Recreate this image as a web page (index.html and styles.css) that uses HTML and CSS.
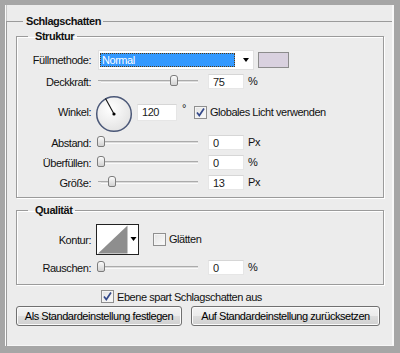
FILE: index.html
```html
<!DOCTYPE html>
<html lang="de">
<head>
    <meta charset="UTF-8">
    <meta name="viewport" content="width=device-width, initial-scale=1.0">
    <title>Ebenenstil - Schlagschatten</title>
    <link rel="stylesheet" href="styles.css">
</head>
<body>

<div class="window">
    <fieldset class="group main-group">
        <legend>Schlagschatten</legend>

        <fieldset class="group box structure">
            <legend>Struktur</legend>

            <div class="row row-blend">
                <span class="label">Füllmethode:</span>
                <div class="select">
                    <span class="select-value">Normal</span>
                    <span class="select-arrow"></span>
                </div>
                <span class="swatch"></span>
            </div>

            <div class="row">
                <span class="label">Deckkraft:</span>
                <div class="slider"><span class="thumb" style="left: 75%"></span></div>
                <input class="field" type="text" value="75" readonly>
                <span class="unit">%</span>
            </div>

            <div class="row row-angle">
                <span class="label">Winkel:</span>
                <svg class="dial" width="38" height="38" viewBox="0 0 38 38">
                    <defs>
                        <radialGradient id="dialFill" cx="40%" cy="35%" r="70%">
                            <stop offset="0" stop-color="#ffffff"/>
                            <stop offset="1" stop-color="#e2e2e2"/>
                        </radialGradient>
                    </defs>
                    <circle cx="19" cy="19" r="17.3" fill="url(#dialFill)" stroke="#4b5878" stroke-width="1.5"/>
                    <line x1="19" y1="19" x2="10.5" y2="3.5" stroke="#111" stroke-width="1.1"/>
                    <circle cx="19" cy="19" r="1.6" fill="#000"/>
                </svg>
                <input class="field field-angle" type="text" value="120" readonly>
                <span class="degree">°</span>
                <label class="check">
                    <span class="check-box">
                        <svg width="11" height="11" viewBox="0 0 11 11"><path d="M2 5.5 L4.3 8.5 L9 1.5" fill="none" stroke="#34498a" stroke-width="1.7"/></svg>
                    </span>
                    Globales Licht verwenden
                </label>
            </div>

            <div class="row">
                <span class="label">Abstand:</span>
                <div class="slider"><span class="thumb" style="left: 0%"></span></div>
                <input class="field" type="text" value="0" readonly>
                <span class="unit">Px</span>
            </div>

            <div class="row">
                <span class="label">Überfüllen:</span>
                <div class="slider"><span class="thumb" style="left: 0%"></span></div>
                <input class="field" type="text" value="0" readonly>
                <span class="unit">%</span>
            </div>

            <div class="row">
                <span class="label">Größe:</span>
                <div class="slider"><span class="thumb" style="left: 11%"></span></div>
                <input class="field" type="text" value="13" readonly>
                <span class="unit">Px</span>
            </div>
        </fieldset>

        <fieldset class="group box quality">
            <legend>Qualität</legend>

            <div class="row row-contour">
                <span class="label">Kontur:</span>
                <svg class="contour" width="43" height="31" viewBox="0 0 43 31">
                    <rect x="0.5" y="0.5" width="42" height="30" fill="#fff" stroke="#222"/>
                    <polygon points="2,29.5 31.5,1.5 31.5,29.5" fill="#8e8e8e"/>
                    <polygon points="34.5,13 40.5,13 37.5,17" fill="#000"/>
                </svg>
                <label class="check check-smooth">
                    <span class="check-box"></span>
                    Glätten
                </label>
            </div>

            <div class="row">
                <span class="label">Rauschen:</span>
                <div class="slider"><span class="thumb" style="left: 0%"></span></div>
                <input class="field" type="text" value="0" readonly>
                <span class="unit">%</span>
            </div>
        </fieldset>

        <label class="check check-layer">
            <span class="check-box">
                <svg width="11" height="11" viewBox="0 0 11 11"><path d="M2 5.5 L4.3 8.5 L9 1.5" fill="none" stroke="#34498a" stroke-width="1.7"/></svg>
            </span>
            Ebene spart Schlagschatten aus
        </label>

        <div class="buttons">
            <button class="btn btn-save">Als Standardeinstellung festlegen</button>
            <button class="btn btn-reset">Auf Standardeinstellung zurücksetzen</button>
        </div>
    </fieldset>
</div>

</body>
</html>
```

FILE: styles.css
```css
body {
    margin: 0;
    background-color: #a6a6a6;
    font-family: "Liberation Sans", Arial, sans-serif;
    font-size: 11px;
    letter-spacing: -0.45px;
    color: #111;
}

.window {
    margin: 5px 6px 0 5px;
    height: 341px;
    box-sizing: border-box;
    padding-top: 10px;
    background-color: #ececec;
    border-left: 1px solid #fbfbfb;
    border-right: 2px solid #f8f8f8;
    border-bottom: 1px solid #f6f6f6;
    box-shadow: inset 1px 0 0 #c6c6c6;
}

fieldset.group {
    margin: 0;
    min-width: 0;
    border: 1px solid #9b9b9b;
}

fieldset.group legend {
    font-weight: bold;
    line-height: 13px;
}

.main-group {
    margin-left: 5px;
    padding: 2px 6px 0 9px;
    height: 331px;
    box-sizing: border-box;
    border-right: none !important;
    border-bottom: none !important;
}

.main-group > legend {
    margin-left: 7px;
    padding: 0 2px 0 3px;
}

.box {
    margin-right: 2px !important;
    padding: 7px 0 6px 0;
    box-shadow: 1px 1px 0 #fff, inset 1px 1px 0 #fff;
}

.box > legend {
    margin-left: 11px;
    padding: 0 3px 0 7px;
}

.quality {
    margin-top: 6px !important;
    padding: 7px 0 8px 0;
}

.row {
    display: flex;
    align-items: center;
    height: 17px;
    margin-top: 3px;
}

.row:first-of-type {
    margin-top: 0;
}

.row-blend {
    height: 20px;
}

.row-angle {
    height: 38px;
}

.row-contour {
    height: 31px;
    margin-bottom: 4px;
}

.label {
    width: 74px;
    margin-right: 7px;
    text-align: right;
    flex-shrink: 0;
}

/* Füllmethode */
.select {
    display: flex;
    align-items: center;
    width: 156px;
    height: 20px;
    box-sizing: border-box;
    background-color: #fff;
    border: 1px solid #e0e0e0;
    padding: 0 0 0 1px;
}

.select-value {
    width: 135px;
    height: 14px;
    box-sizing: border-box;
    background-color: #3399ff;
    color: #fff;
    border: 1px dotted #5a3a10;
    line-height: 12px;
    padding-left: 1px;
}

.select-arrow {
    margin-left: 8px;
    width: 0;
    height: 0;
    border-left: 3.5px solid transparent;
    border-right: 3.5px solid transparent;
    border-top: 4px solid #000;
}

.swatch {
    margin-left: 4px;
    width: 31px;
    height: 16px;
    box-sizing: border-box;
    background-color: #d9d1df;
    border: 1px solid #8c8c8c;
}

/* Regler */
.slider {
    position: relative;
    width: 97px;
    height: 3px;
    margin-left: 3px;
    margin-right: 10px;
    border-top: 1px solid #ababab;
    border-bottom: 1px solid #fafafa;
    background-color: #dcdcdc;
    box-sizing: border-box;
}

.slider::before {
    content: "";
    position: absolute;
    left: -3px;
    top: -1px;
    width: 3px;
    height: 1px;
    background-color: #ababab;
}

.thumb {
    position: absolute;
    top: -6px;
    width: 8px;
    height: 11px;
    margin-left: -4px;
    box-sizing: border-box;
    border: 1px solid #7c7c7c;
    border-radius: 3px 3px 2px 2px;
    background: linear-gradient(#fbfbfb, #d2d2d2);
}

.field {
    width: 36px;
    height: 15px;
    box-sizing: border-box;
    margin: 0 4px 0 0;
    padding: 0 0 0 4px;
    border: 1px solid #e6e6e6;
    border-top-color: #d6d6d6;
    background-color: #fff;
    font: inherit;
    letter-spacing: inherit;
    color: #1a1a1a;
    outline: none;
}

.unit {
    margin-top: -2px;
}

/* Winkel */
.dial {
    margin-left: -3px;
    margin-top: 3px;
    flex-shrink: 0;
}

.field-angle {
    width: 40px;
    height: 17px;
    margin-left: 4px;
}

.degree {
    align-self: flex-start;
    margin-top: 9px;
    margin-left: 1px;
}

.check {
    display: flex;
    align-items: center;
    gap: 3px;
}

.row-angle .check {
    margin-left: 8px;
}

.check-box {
    display: flex;
    align-items: center;
    justify-content: center;
    width: 13px;
    height: 13px;
    box-sizing: border-box;
    border: 1px solid #8f8f8f;
    background: linear-gradient(135deg, #e2e2e2, #fbfbfb);
    box-shadow: inset 0 0 0 1px #f4f4f4;
}

/* Qualität */
.contour {
    margin-left: -2px;
    flex-shrink: 0;
}

.check-smooth {
    margin-left: 14px;
    margin-top: -1px;
}

.check-layer {
    margin: 5px 0 0 85px;
    height: 13px;
}

.buttons {
    display: flex;
    gap: 9px;
    margin-top: 3px;
}

.btn {
    height: 20px;
    padding: 0;
    border: 1px solid #707070;
    border-radius: 3px;
    background: linear-gradient(#f3f3f3 0%, #ebebeb 50%, #dddddd 51%, #d0d0d0 100%);
    box-shadow: inset 0 0 0 1px #fbfbfb;
    font: inherit;
    letter-spacing: inherit;
    color: #000;
}

.btn-save {
    width: 166px;
}

.btn-reset {
    width: 189px;
}
```
